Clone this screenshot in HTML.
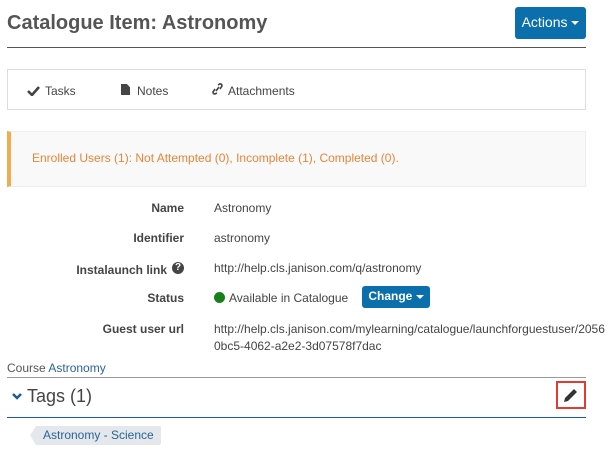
<!DOCTYPE html>
<html><head><style>
*{box-sizing:border-box;margin:0;padding:0}
body{width:610px;height:451px;overflow:hidden;background:#fff;font-family:"Liberation Sans",Arial,sans-serif;color:#333;font-size:12px;position:relative}
.a{position:absolute;white-space:nowrap}
.lbl{position:absolute;right:426px;font-weight:bold;color:#444;font-size:12px}
.val{position:absolute;left:214px;color:#444;font-size:12px}
</style></head><body>
<div class="a" style="left:7px;top:12px;font-size:20px;font-weight:bold;color:#555">Catalogue Item: Astronomy</div>
<div class="a" style="left:515px;top:7px;width:71px;height:32px;background:#0b6fab;border-radius:3px;color:#fff;font-size:14px;line-height:31px;text-align:center">Actions <span style="display:inline-block;border-left:4px solid transparent;border-right:4px solid transparent;border-top:4px solid #fff;vertical-align:middle"></span></div>
<div class="a" style="left:7px;top:47px;width:579px;height:1px;background:#555"></div>
<div class="a" style="left:7px;top:69px;width:579px;height:41px;border:1px solid #ddd"></div>
<svg class="a" style="left:27px;top:85px" width="13" height="11"><path d="M1 6 L5 10 L12 2" stroke="#444" stroke-width="2.6" fill="none"/></svg>
<div class="a" style="left:45px;top:84px;font-size:12px;color:#444">Tasks</div>
<div class="a" style="left:121px;top:84px;width:9px;height:11px;background:#444;clip-path:polygon(0 0,65% 0,100% 30%,100% 100%,0 100%)"></div>
<div class="a" style="left:137px;top:84px;font-size:12px;color:#444">Notes</div>
<svg class="a" style="left:212px;top:83px" width="11" height="12"><path d="M6 2 L8 0.8 Q10 1 10 3 L8 6 M5 10 L3 11 Q1 11 1 9 L3 6 M4 8 L7 4" stroke="#444" stroke-width="1.6" fill="none"/></svg>
<div class="a" style="left:228px;top:84px;font-size:12px;color:#444">Attachments</div>
<div class="a" style="left:7px;top:131px;width:579px;height:56px;background:#f9f9f9;border:1px solid #eee;border-left:4px solid #f0ad4e"></div>
<div class="a" style="left:32px;top:151px;color:#e5863a;font-size:12px">Enrolled Users (1): Not Attempted (0), Incomplete (1), Completed (0).</div>
<div class="lbl" style="top:201px">Name</div><div class="val" style="top:201px">Astronomy</div>
<div class="lbl" style="top:231px">Identifier</div><div class="val" style="top:231px">astronomy</div>
<div class="lbl" style="top:263px;right:443px">Instalaunch link</div>
<div class="a" style="left:172px;top:262px;width:12px;height:12px;border-radius:50%;background:#444;color:#fff;font-size:10px;font-weight:bold;text-align:center;line-height:12px">?</div>
<div class="val" style="top:261px">http://help.cls.janison.com/q/astronomy</div>
<div class="lbl" style="top:291px">Status</div>
<div class="a" style="left:214px;top:292px;width:11px;height:11px;border-radius:50%;background:#1a7f1a"></div>
<div class="val" style="top:291px;left:229px">Available in Catalogue</div>
<div class="a" style="left:362px;top:286px;width:68px;height:22px;background:#0b6fab;border-radius:3px;color:#fff;font-weight:bold;font-size:12px;line-height:21px;text-align:center">Change <span style="display:inline-block;border-left:4px solid transparent;border-right:4px solid transparent;border-top:4px solid #fff;vertical-align:middle"></span></div>
<div class="lbl" style="top:322px">Guest user url</div>
<div class="val" style="top:322px">http://help.cls.janison.com/mylearning/catalogue/launchforguestuser/2056</div>
<div class="val" style="top:339px">0bc5-4062-a2e2-3d07578f7dac</div>
<div class="a" style="left:7px;top:361px;color:#555">Course <span style="color:#2a6496">Astronomy</span></div>
<div class="a" style="left:7px;top:377px;width:579px;height:1px;background:#999"></div>
<svg class="a" style="left:12px;top:393px" width="10" height="7"><path d="M1 1 L5 5 L9 1" stroke="#1a5c99" stroke-width="2.5" fill="none"/></svg>
<div class="a" style="left:27px;top:386px;font-size:18px;color:#444">Tags (1)</div>
<div class="a" style="left:556px;top:381px;width:30px;height:28px;border:2px solid #e03c31"></div>
<svg class="a" style="left:562px;top:387px" width="17" height="17"><path d="M2 15 L3 11 L12 2 L15 5 L6 14 Z" fill="#333"/></svg>
<div class="a" style="left:7px;top:417px;width:579px;height:1px;background:#1a5c99"></div>
<div class="a" style="left:30px;top:426px;width:131px;height:19px;background:#e4e8ec;border-radius:2px;clip-path:polygon(6px 0,100% 0,100% 100%,6px 100%,0 50%)"></div>
<div class="a" style="left:43px;top:428px;color:#2a6496;font-size:12px">Astronomy - Science</div>
</body></html>
